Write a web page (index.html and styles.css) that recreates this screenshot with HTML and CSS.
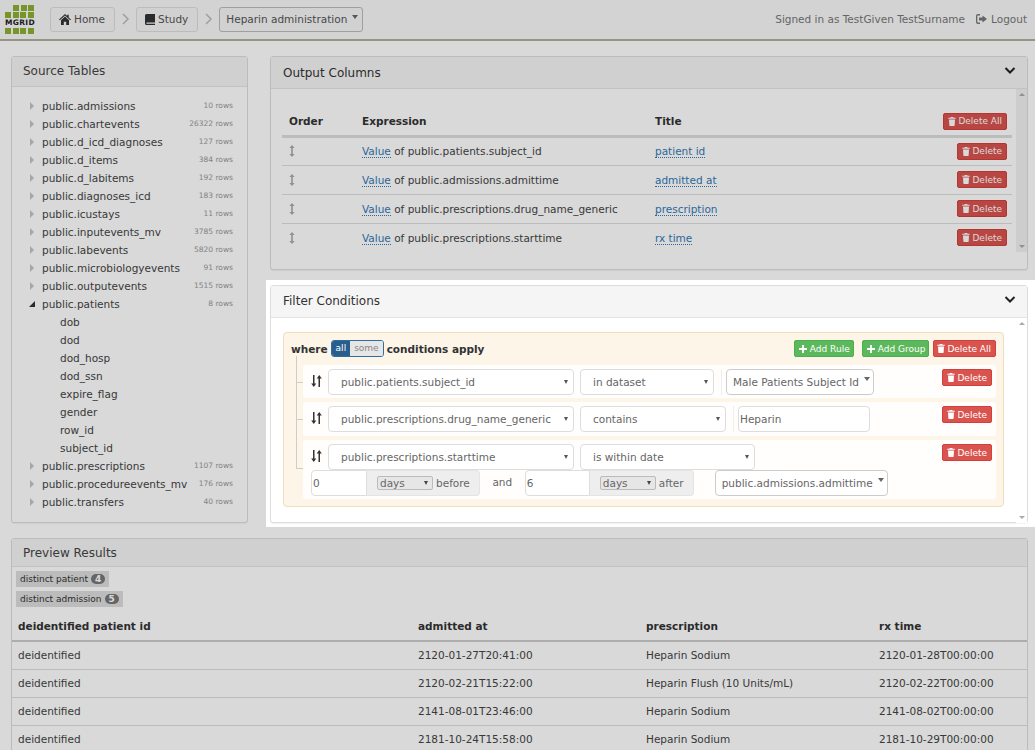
FILE: index.html
```html
<!DOCTYPE html>
<html lang="en">
<head>
  <meta charset="UTF-8">
  <title>Heparin administration</title>
  <link rel="stylesheet" href="styles.css">
</head>
<body>
  <svg class="defs" width="0" height="0">
    <symbol id="i-trash" viewBox="0 0 10 12"><path d="M3.4 0h3.2l.5 1H10v1.4H0V1h2.900zM1 3.200h8l-.5 8.200q-.1.600-.7.600H2.200q-.6 0-.7-.6z"/></symbol>
    <symbol id="i-plus" viewBox="0 0 10 10"><path d="M3.800 0h2.400v3.800H10v2.400H6.200V10H3.800V6.200H0V3.800h3.800z"/></symbol>
    <symbol id="i-swap" viewBox="0 0 11 12"><path d="M2 0h1.500v8.500H5.300L2.750 12 .2 8.500H2zM7.500 12H9V3.500h1.800L8.250 0 5.700 3.500h1.800z"/></symbol>
    <symbol id="i-move" viewBox="0 0 6 12"><path d="M3 0l2.600 3H3.800v6h1.800L3 12 .4 9h1.800V3H.4z"/></symbol>
    <symbol id="i-chevron" viewBox="0 0 12 8"><path d="M1.500 1L6 5.500 10.500 1" fill="none" stroke="currentColor" stroke-width="2"/></symbol>
    <symbol id="i-crumb" viewBox="0 0 8 12"><path d="M1 1l5 5-5 5" fill="none" stroke="currentColor" stroke-width="1.500"/></symbol>
  </svg>

  <nav class="navbar">
    <div class="logo">
      <div class="logo-row indent"><i></i><i></i><i></i></div>
      <div class="logo-row"><i></i><i></i><i></i><i></i></div>
      <div class="logo-text">MGRID</div>
      <div class="logo-row"><i></i><i></i><i></i><i></i></div>
    </div>
    <a class="crumb">
      <svg class="icon" width="12" height="11" viewBox="0 0 12 11"><path d="M6 0l2.200 2V.8h1.500v2.600L12 5.500l-.8.8L6 1.600.8 6.300 0 5.500zM2 6.200L6 2.600l4 3.600V11H7.200V7.800H4.800V11H2z"/></svg>
      Home
    </a>
    <svg class="crumb-sep" width="8" height="12"><use href="#i-crumb"/></svg>
    <a class="crumb">
      <svg class="icon" width="10" height="11" viewBox="0 0 10 11"><path d="M1.500 0H10v8.500H2q-.8 0-.8.600t.8.600h8V11H1.500Q0 11 0 9.500v-8Q0 0 1.500 0z"/></svg>
      Study
    </a>
    <svg class="crumb-sep" width="8" height="12"><use href="#i-crumb"/></svg>
    <a class="crumb crumb-active">Heparin administration <span class="caret"></span></a>
    <div class="navbar-right">
      <span>Signed in as TestGiven TestSurname</span>
      <a class="logout">
        <svg class="icon" width="11" height="10" viewBox="0 0 11 10"><path d="M4 0v1.400H2q-.7 0-.7.700v5.800q0 .7.700.7h2V10H2Q0 10 0 8V2q0-2 2-2zM6.500 1.500L11 5 6.500 8.500V6.500H3v-3h3.500z"/></svg>
        Logout
      </a>
    </div>
  </nav>

  <div class="columns">
    <section class="panel source-panel">
      <h3 class="panel-heading">Source Tables</h3>
      <ul class="tree">
        <li><span class="arrow"></span><span class="name">public.admissions</span><small>10 rows</small></li>
        <li><span class="arrow"></span><span class="name">public.chartevents</span><small>26322 rows</small></li>
        <li><span class="arrow"></span><span class="name">public.d_icd_diagnoses</span><small>127 rows</small></li>
        <li><span class="arrow"></span><span class="name">public.d_items</span><small>384 rows</small></li>
        <li><span class="arrow"></span><span class="name">public.d_labitems</span><small>192 rows</small></li>
        <li><span class="arrow"></span><span class="name">public.diagnoses_icd</span><small>183 rows</small></li>
        <li><span class="arrow"></span><span class="name">public.icustays</span><small>11 rows</small></li>
        <li><span class="arrow"></span><span class="name">public.inputevents_mv</span><small>3785 rows</small></li>
        <li><span class="arrow"></span><span class="name">public.labevents</span><small>5820 rows</small></li>
        <li><span class="arrow"></span><span class="name">public.microbiologyevents</span><small>91 rows</small></li>
        <li><span class="arrow"></span><span class="name">public.outputevents</span><small>1515 rows</small></li>
        <li><span class="arrow open"></span><span class="name">public.patients</span><small>8 rows</small></li>
        <li class="child">dob</li>
        <li class="child">dod</li>
        <li class="child">dod_hosp</li>
        <li class="child">dod_ssn</li>
        <li class="child">expire_flag</li>
        <li class="child">gender</li>
        <li class="child">row_id</li>
        <li class="child">subject_id</li>
        <li><span class="arrow"></span><span class="name">public.prescriptions</span><small>1107 rows</small></li>
        <li><span class="arrow"></span><span class="name">public.procedureevents_mv</span><small>176 rows</small></li>
        <li><span class="arrow"></span><span class="name">public.transfers</span><small>40 rows</small></li>
      </ul>
    </section>

    <div class="right-column">
      <section class="panel output-panel">
        <div class="panel-heading heading-large">
          <h3>Output Columns</h3>
          <svg class="collapse" width="12" height="8"><use href="#i-chevron"/></svg>
        </div>
        <div class="panel-body">
          <div class="panel-content">
            <table class="output-table">
              <thead>
                <tr>
                  <th class="col-order">Order</th>
                  <th class="col-expr">Expression</th>
                  <th>Title</th>
                  <th class="col-action"><button class="btn btn-danger"><svg width="8" height="9"><use href="#i-trash"/></svg> Delete All</button></th>
                </tr>
              </thead>
              <tbody>
                <tr>
                  <td><svg class="move" width="6" height="12"><use href="#i-move"/></svg></td>
                  <td><a class="editable">Value</a> of public.patients.subject_id</td>
                  <td><a class="editable">patient id</a></td>
                  <td class="col-action"><button class="btn btn-danger"><svg width="8" height="9"><use href="#i-trash"/></svg> Delete</button></td>
                </tr>
                <tr>
                  <td><svg class="move" width="6" height="12"><use href="#i-move"/></svg></td>
                  <td><a class="editable">Value</a> of public.admissions.admittime</td>
                  <td><a class="editable">admitted at</a></td>
                  <td class="col-action"><button class="btn btn-danger"><svg width="8" height="9"><use href="#i-trash"/></svg> Delete</button></td>
                </tr>
                <tr>
                  <td><svg class="move" width="6" height="12"><use href="#i-move"/></svg></td>
                  <td><a class="editable">Value</a> of public.prescriptions.drug_name_generic</td>
                  <td><a class="editable">prescription</a></td>
                  <td class="col-action"><button class="btn btn-danger"><svg width="8" height="9"><use href="#i-trash"/></svg> Delete</button></td>
                </tr>
                <tr>
                  <td><svg class="move" width="6" height="12"><use href="#i-move"/></svg></td>
                  <td><a class="editable">Value</a> of public.prescriptions.starttime</td>
                  <td><a class="editable">rx time</a></td>
                  <td class="col-action"><button class="btn btn-danger"><svg width="8" height="9"><use href="#i-trash"/></svg> Delete</button></td>
                </tr>
              </tbody>
            </table>
          </div>
          <div class="scrollbar"><span class="sb-up"></span><span class="sb-down"></span></div>
        </div>
      </section>

      <div class="filter-wrap">
        <section class="panel filter-panel">
          <div class="panel-heading heading-large">
            <h3>Filter Conditions</h3>
            <svg class="collapse" width="12" height="8"><use href="#i-chevron"/></svg>
          </div>
          <div class="panel-body">
            <div class="panel-content filter-content">
              <div class="group">
                <div class="group-header">
                  <strong>where</strong>
                  <span class="toggle"><span class="on">all</span><span class="off">some</span></span>
                  <strong>conditions apply</strong>
                  <div class="group-actions">
                    <button class="btn btn-success"><svg width="8" height="8"><use href="#i-plus"/></svg> Add Rule</button>
                    <button class="btn btn-success"><svg width="8" height="8"><use href="#i-plus"/></svg> Add Group</button>
                    <button class="btn btn-danger"><svg width="8" height="9"><use href="#i-trash"/></svg> Delete All</button>
                  </div>
                </div>
                <div class="rules">
                  <div class="rule">
                    <svg class="swap" width="11" height="12"><use href="#i-swap"/></svg>
                    <div class="rule-main">
                      <div class="rule-line">
                        <span class="select w-field">public.patients.subject_id</span>
                        <span class="select w-op">in dataset</span>
                        <span class="sep"></span>
                        <span class="dropdown w-value">Male Patients Subject Id <span class="caret"></span></span>
                      </div>
                    </div>
                    <button class="btn btn-danger"><svg width="8" height="9"><use href="#i-trash"/></svg> Delete</button>
                  </div>
                  <div class="rule">
                    <svg class="swap" width="11" height="12"><use href="#i-swap"/></svg>
                    <div class="rule-main">
                      <div class="rule-line">
                        <span class="select w-field">public.prescriptions.drug_name_generic</span>
                        <span class="select w-op-wide">contains</span>
                        <span class="sep"></span>
                        <span class="text-input w-text">Heparin</span>
                      </div>
                    </div>
                    <button class="btn btn-danger"><svg width="8" height="9"><use href="#i-trash"/></svg> Delete</button>
                  </div>
                  <div class="rule">
                    <svg class="swap" width="11" height="12"><use href="#i-swap"/></svg>
                    <div class="rule-main">
                      <div class="rule-line">
                        <span class="select w-field">public.prescriptions.starttime</span>
                        <span class="select w-op-date">is within date</span>
                      </div>
                      <div class="rule-line second-line">
                        <span class="input-group">
                          <span class="text-input w-num">0</span>
                          <span class="addon"><span class="mini-select">days</span> before</span>
                        </span>
                        <span class="and">and</span>
                        <span class="input-group">
                          <span class="text-input w-num2">6</span>
                          <span class="addon"><span class="mini-select">days</span> after</span>
                        </span>
                        <span class="dropdown w-date">public.admissions.admittime <span class="caret"></span></span>
                      </div>
                    </div>
                    <button class="btn btn-danger"><svg width="8" height="9"><use href="#i-trash"/></svg> Delete</button>
                  </div>
                </div>
              </div>
            </div>
            <div class="scrollbar scrollbar-light"><span class="sb-up"></span><span class="sb-down"></span></div>
          </div>
        </section>
      </div>
    </div>
  </div>

  <section class="panel preview-panel">
    <h3 class="panel-heading">Preview Results</h3>
    <div class="tags">
      <span class="tag">distinct patient <b class="badge">4</b></span>
      <span class="tag">distinct admission <b class="badge">5</b></span>
    </div>
    <table class="preview-table">
      <thead>
        <tr><th class="p1">deidentified patient id</th><th class="p2">admitted at</th><th class="p3">prescription</th><th>rx time</th></tr>
      </thead>
      <tbody>
        <tr><td>deidentified</td><td>2120-01-27T20:41:00</td><td>Heparin Sodium</td><td>2120-01-28T00:00:00</td></tr>
        <tr><td>deidentified</td><td>2120-02-21T15:22:00</td><td>Heparin Flush (10 Units/mL)</td><td>2120-02-22T00:00:00</td></tr>
        <tr><td>deidentified</td><td>2141-08-01T23:46:00</td><td>Heparin Sodium</td><td>2141-08-02T00:00:00</td></tr>
        <tr><td>deidentified</td><td>2181-10-24T15:58:00</td><td>Heparin Sodium</td><td>2181-10-29T00:00:00</td></tr>
      </tbody>
    </table>
  </section>

  <div class="backdrop"></div>
</body>
</html>
```

FILE: styles.css
```css
* {
  box-sizing: border-box;
}

html, body {
  height: 750px;
  overflow: hidden;
}

body {
  margin: 0;
  background-color: #fff;
  color: #333;
  font-family: "DejaVu Sans", sans-serif;
  font-size: 10.500px;
  line-height: 16px;
}

.defs {
  position: absolute;
}

svg {
  fill: currentColor;
}

.backdrop {
  position: fixed;
  inset: 0;
  background-color: rgba(0, 0, 0, 0.15);
  z-index: 10;
}

/* navbar */
.navbar {
  display: flex;
  align-items: center;
  height: 41px;
  padding: 0 8px 1px 5px;
  background-color: #f8f8f8;
  border-bottom: 2px solid #b0b09c;
  color: #555;
}

.logo {
  width: 30px;
  margin-top: 2px;
  margin-right: 15px;
}

.logo-row {
  display: flex;
  gap: 1.500px;
  height: 6px;
  margin-bottom: 1px;
}

.logo-row.indent {
  padding-left: 8px;
}

.logo-row i {
  width: 6px;
  background-color: #8cb030;
}

.logo-text {
  height: 8px;
  margin-bottom: 1px;
  font-size: 7.500px;
  font-weight: bold;
  line-height: 8px;
  letter-spacing: 0.300px;
  color: #222;
}

.crumb {
  display: flex;
  align-items: center;
  gap: 3px;
  height: 25px;
  padding: 0 9px 0 8px;
  border: 1px solid #ddd;
  border-radius: 3px;
  background-color: #f6f6f6;
}

.crumb-active {
  padding: 0 4px 0 6px;
  border-color: #bbb;
}

.crumb .icon {
  color: #333;
}

.crumb-sep {
  margin: 0 6.500px;
  color: #bbb;
}

.caret {
  display: inline-block;
  width: 0;
  height: 0;
  margin-left: 2px;
  margin-bottom: 5px;
  border-top: 4px solid #666;
  border-left: 3px solid transparent;
  border-right: 3px solid transparent;
}

.navbar-right {
  display: flex;
  gap: 11px;
  margin-left: auto;
  color: #777;
}

.logout {
  display: flex;
  align-items: center;
  gap: 4px;
}

/* layout */
.columns {
  display: flex;
  gap: 22px;
  padding: 15px 7px 0 11px;
}

.right-column {
  flex: 1;
  display: flex;
  flex-direction: column;
  min-width: 0;
}

/* panels */
.panel {
  background-color: #fff;
  border: 1px solid #ddd;
  border-radius: 3px;
  box-shadow: 0 1px 1px rgba(0, 0, 0, 0.05);
}

.panel-heading {
  margin: 0;
  height: 30px;
  padding: 6px 11px;
  background-color: #f5f5f5;
  border-bottom: 1px solid #e4e4e4;
  font-size: 12px;
  font-weight: normal;
  color: #444;
}

.heading-large {
  display: flex;
  align-items: center;
  justify-content: space-between;
  height: 32px;
  padding: 0 11px 0 12px;
}

.heading-large h3 {
  margin: 0;
  font-size: 12px;
  font-weight: normal;
  color: #333;
}

.collapse {
  margin-top: -4px;
  color: #222;
}

.panel-body {
  display: flex;
}

.panel-content {
  flex: 1;
  min-width: 0;
}

.scrollbar {
  display: flex;
  flex-direction: column;
  justify-content: space-between;
  align-items: center;
  width: 11px;
  padding: 4px 0;
  background-color: #f1f1f1;
}

.scrollbar-light {
  background-color: #fff;
}

.sb-up {
  border-bottom: 3px solid #aaa;
  border-left: 3px solid transparent;
  border-right: 3px solid transparent;
}

.sb-down {
  border-top: 3px solid #aaa;
  border-left: 3px solid transparent;
  border-right: 3px solid transparent;
}

/* source tables */
.source-panel {
  width: 237px;
  height: 467px;
  flex-shrink: 0;
}

.tree {
  list-style: none;
  margin: 0;
  padding: 10px 14px 0 17px;
}

.tree li {
  display: flex;
  align-items: center;
  height: 18px;
  color: #444;
}

.tree li.child {
  padding-left: 31px;
}

.arrow {
  width: 0;
  height: 0;
  margin-left: 1px;
  margin-right: 8px;
  border-left: 4px solid #c4c4c4;
  border-top: 4px solid transparent;
  border-bottom: 4px solid transparent;
}

.arrow.open {
  margin-left: 0;
  margin-right: 7px;
  border-left: 6px solid transparent;
  border-top: 0;
  border-bottom: 6px solid #333;
}

.tree small {
  margin-left: auto;
  font-size: 7.500px;
  color: #999;
}

/* buttons */
.btn {
  display: inline-flex;
  align-items: center;
  gap: 2px;
  height: 17px;
  padding: 0 4px;
  border: 1px solid transparent;
  border-radius: 2px;
  font-family: inherit;
  font-size: 9px;
  color: #fff;
}

.btn-danger {
  background-color: #d9534f;
  border-color: #d43f3a;
}

.btn-success {
  gap: 3px;
  padding-right: 3px;
  background-color: #5cb85c;
  border-color: #4cae4c;
}

/* output columns */
.output-panel {
  height: 214px;
}

.output-table {
  width: 730px;
  margin: 19px 0 0 11px;
  border-collapse: collapse;
}

.output-table th {
  height: 28px;
  padding: 0 7px;
  border-bottom: 3px solid #ddd;
  font-size: 10.500px;
  text-align: left;
}

.output-table td {
  height: 29px;
  padding: 0 7px;
  border-bottom: 1px solid #ddd;
  color: #444;
}

.output-table .col-order {
  width: 73px;
}

.output-table .col-expr {
  width: 293px;
}

.output-table .col-action {
  padding: 0 5px;
  text-align: right;
}

.output-table tbody tr:last-child td {
  border-bottom: 0;
}

.move {
  display: block;
  color: #aaa;
}

.editable {
  color: #337ab7;
  border-bottom: 1px dotted #337ab7;
}

/* filter conditions: sits above the backdrop */
.filter-wrap {
  position: relative;
  z-index: 20;
  margin: 10px -7px 0 -4px;
  padding: 5px 7px 4px 4px;
  background-color: #fff;
}

.filter-panel {
  height: 238px;
}

.filter-panel h3 {
  margin-top: -2px;
}

.filter-content {
  padding: 14px 12px 0;
}

.filter-panel .scrollbar {
  height: 205px;
}

.group {
  height: 175px;
  padding: 7px 7px 0;
  background-color: #fcf5e8;
  border: 1px solid #ecdfba;
  border-radius: 4px;
}

.group-header {
  display: flex;
  align-items: center;
  gap: 3px;
  height: 17px;
  font-size: 10.500px;
}

.group-actions {
  display: flex;
  gap: 4px;
  margin-left: auto;
}

.group-actions .btn:first-child {
  margin-right: 4px;
}

.group-actions .btn-danger {
  padding-left: 3px;
}

.toggle {
  display: flex;
  height: 17px;
  overflow: hidden;
  border: 1px solid #2e6da4;
  border-radius: 3px;
  font-size: 9px;
  line-height: 15px;
}

.toggle .on {
  padding: 0 4px;
  background-color: #285e8e;
  color: #fff;
}

.toggle .off {
  padding: 0 4px;
  background-color: #e6e6e6;
  color: #888;
}

.rules {
  position: relative;
  margin: 8px 0 0 12px;
}

.rules::before {
  content: "";
  position: absolute;
  left: -7px;
  top: -9px;
  width: 7px;
  height: 112px;
  border-left: 1px solid #ccc;
  border-bottom: 1px solid #ccc;
}

.rule {
  position: relative;
  display: flex;
  align-items: flex-start;
  margin-bottom: 4px;
  padding: 4px 4px 3px 8px;
  background-color: #fffefc;
  border-radius: 3px;
  color: #666;
}

.rule:nth-child(2) {
  padding-bottom: 4px;
}

.rule::before {
  content: "";
  position: absolute;
  left: -7px;
  top: 17px;
  width: 7px;
  border-top: 1px solid #ccc;
}

.rule:last-child::before {
  display: none;
}

.swap {
  flex-shrink: 0;
  margin: 6px 6px 0 0;
  color: #333;
}

.rule-main {
  flex: 1;
  min-width: 0;
}

.rule-line {
  display: flex;
  align-items: center;
}

.select {
  position: relative;
  display: block;
  height: 26px;
  padding: 0 12px;
  margin-right: 6px;
  border: 1px solid #ddd;
  border-radius: 4px;
  background-color: #fff;
  line-height: 24px;
}

.select::after {
  content: "";
  position: absolute;
  right: 5px;
  top: 10px;
  border-top: 4px solid #555;
  border-left: 2px solid transparent;
  border-right: 2px solid transparent;
}

.w-field {
  width: 246px;
}

.w-op {
  width: 134px;
}

.w-op-wide {
  width: 146px;
}

.w-op-date {
  width: 175px;
}

.sep {
  width: 1px;
  height: 26px;
  margin: 0 4px 0 1px;
  background-color: #eee;
}

.dropdown {
  display: block;
  height: 26px;
  padding: 0 6px;
  border: 1px solid #ccc;
  border-radius: 4px;
  background-color: #fff;
  line-height: 24px;
  white-space: nowrap;
}

.w-value {
  width: 148px;
}

.w-date {
  width: 173px;
  margin-left: 21px;
}

.text-input {
  display: block;
  height: 26px;
  padding: 0 1px;
  border: 1px solid #ddd;
  border-radius: 4px;
  background-color: #fff;
  line-height: 24px;
}

.w-text {
  width: 132px;
}

.second-line {
  margin-left: -17px;
  margin-right: -60px;
}

.input-group {
  display: flex;
}

.input-group .text-input {
  border-radius: 4px 0 0 4px;
}

.w-num {
  width: 56px;
}

.w-num2 {
  width: 65px;
}

.addon {
  display: flex;
  align-items: center;
  gap: 3px;
  height: 26px;
  padding: 0 9px 0 10px;
  background-color: #eee;
  border: 1px solid #e4e4e4;
  border-left: 0;
  border-radius: 0 4px 4px 0;
}

.mini-select {
  position: relative;
  display: block;
  width: 56px;
  height: 14px;
  padding-left: 2px;
  border: 1px solid #bbb;
  border-radius: 2px;
  background-color: #e6e6e6;
  line-height: 12px;
}

.mini-select::after {
  content: "";
  position: absolute;
  right: 4px;
  top: 4px;
  border-top: 4px solid #444;
  border-left: 2px solid transparent;
  border-right: 2px solid transparent;
}

.and {
  width: 45px;
  text-align: center;
  margin-top: -3px;
}

/* preview */
.preview-panel {
  margin: 11px 7px 0 11px;
}

.preview-panel .panel-heading {
  height: 28px;
  padding-top: 6px;
}

.tags {
  display: flex;
  flex-direction: column;
  align-items: flex-start;
  gap: 4px;
  padding: 4px 0 0 4px;
}

.tag {
  display: flex;
  align-items: center;
  gap: 3px;
  height: 16px;
  padding: 0 4px;
  background-color: #ddd;
  font-size: 9px;
}

.badge {
  height: 10px;
  padding: 0 4px;
  border-radius: 6px;
  background-color: #777;
  color: #fff;
  font-size: 9px;
  line-height: 10px;
}

.preview-table {
  width: 100%;
  margin-top: 4px;
  border-collapse: collapse;
}

.preview-table th {
  height: 30px;
  padding: 0 6px;
  border-bottom: 2px solid #ccc;
  font-size: 10.500px;
  text-align: left;
}

.preview-table td {
  height: 28px;
  padding: 0 6px;
  border-bottom: 1px solid #ddd;
  color: #444;
}

.preview-table .p1 {
  width: 400px;
}

.preview-table .p2 {
  width: 228px;
}

.preview-table .p3 {
  width: 233px;
}
```
